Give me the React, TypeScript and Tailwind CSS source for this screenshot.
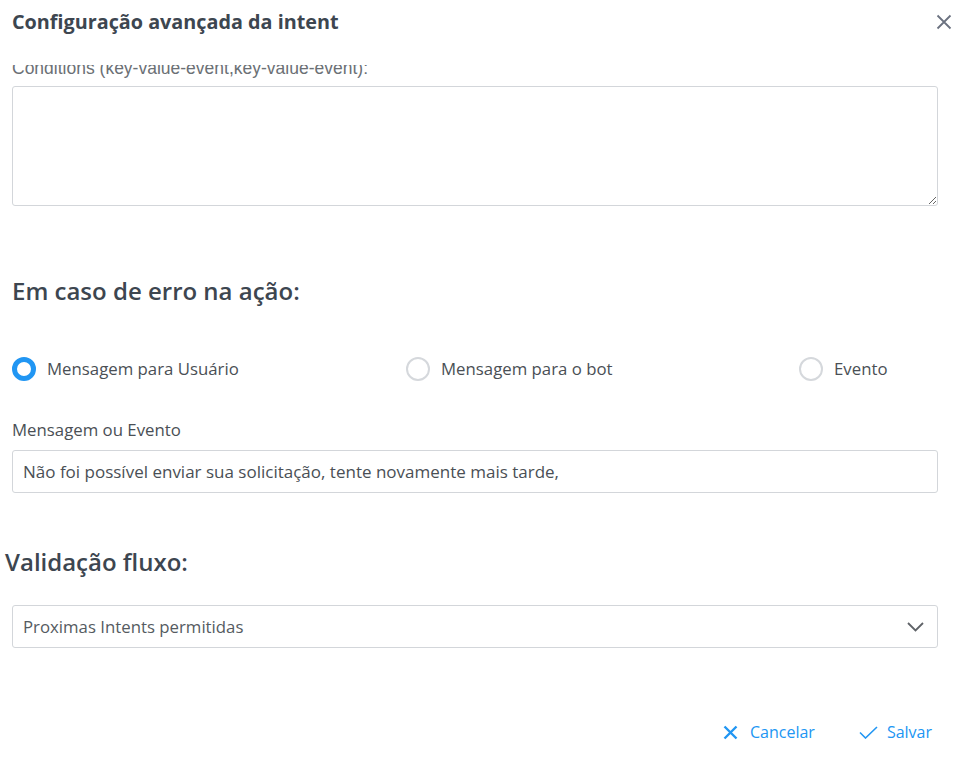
const font = { fontFamily: '"Open Sans", "Noto Sans", sans-serif' };

function Radio({ checked, label }: { checked?: boolean; label: string }) {
  return (
    <label className="flex items-center gap-[11px] cursor-pointer">
      <span
        className={
          checked
            ? "w-6 h-6 rounded-full border-[5px] border-[#2196f3] bg-white"
            : "w-6 h-6 rounded-full border-2 border-[#d5d8dc] bg-white"
        }
      />
      <span className="text-[16.8px] text-[#4a4f55]">{label}</span>
    </label>
  );
}

export default function App() {
  return (
    <div className="w-[958px] h-[768px] bg-white overflow-hidden flex flex-col" style={font}>
      {/* Header */}
      <header className="h-[65px] shrink-0 flex items-start justify-between pl-3 pr-[6px] pt-[7px] bg-white">
        <h1 className="text-[19.8px] font-bold text-[#3d4650] leading-[30px]">
          Configuração avançada da intent
        </h1>
        <button className="mt-[7px] text-[#6b7280]">
          <svg width="16" height="16" viewBox="0 0 16 16" fill="none" stroke="currentColor" strokeWidth="1.8">
            <path d="M1.5 1.5 14.5 14.5M14.5 1.5 1.5 14.5" />
          </svg>
        </button>
      </header>

      {/* Scrolled body */}
      <div className="flex-1 overflow-hidden pl-3 pr-5">
        <label
          className="block -mt-[9px] text-[17.5px] leading-[24px] text-[#6b7075]"
          style={{ fontFamily: '"Liberation Sans", Arial, sans-serif' }}
        >
          Conditions (key-value-event,key-value-event):
        </label>
        <textarea className="block mt-[6px] w-full h-[120px] border border-[#d3d6da] rounded-[3px] resize-y outline-none" />

        <h2 className="mt-[70px] text-[24px] font-semibold leading-[30px] text-[#3d4650]">
          Em caso de erro na ação:
        </h2>

        <div className="mt-[50px] flex items-center">
          <div className="w-[394px]">
            <Radio checked label="Mensagem para Usuário" />
          </div>
          <div className="w-[393px]">
            <Radio label="Mensagem para o bot" />
          </div>
          <Radio label="Evento" />
        </div>

        <label className="block mt-[37px] text-[16.8px] leading-[24px] text-[#4a4f55]">
          Mensagem ou Evento
        </label>
        <input
          className="block mt-[8px] w-full h-[43px] border border-[#d3d6da] rounded-[3px] px-[10px] text-[17px] text-[#4a4f55] outline-none"
          style={font}
          defaultValue="Não foi possível enviar sua solicitação, tente novamente mais tarde,"
        />

        <h2 className="-ml-[7px] mt-[54px] text-[24px] font-semibold leading-[30px] text-[#3d4650]">
          Validação fluxo:
        </h2>

        <div className="mt-[28px] w-full h-[43px] border border-[#d3d6da] rounded-[3px] pl-[10px] pr-[13px] flex items-center justify-between">
          <span className="text-[16.8px] text-[#555b61]">Proximas Intents permitidas</span>
          <svg width="17" height="10" viewBox="0 0 17 10" fill="none" stroke="#5f6368" strokeWidth="1.8">
            <path d="M1 1 8.5 8.5 16 1" />
          </svg>
        </div>

        <div className="mt-[72px] flex justify-end items-center gap-[44px] pr-[6px]">
          <button className="flex items-center gap-[12px] text-[#2196f3] text-[16px]">
            <svg width="15" height="15" viewBox="0 0 15 15" fill="none" stroke="currentColor" strokeWidth="2.4">
              <path d="M1.5 1.5 13.5 13.5M13.5 1.5 1.5 13.5" />
            </svg>
            Cancelar
          </button>
          <button className="flex items-center gap-[9px] text-[#2196f3] text-[16px]">
            <svg width="19" height="13" viewBox="0 0 19 13" fill="none" stroke="currentColor" strokeWidth="1.6">
              <path d="M1 6.5 6.5 12 18 1" />
            </svg>
            Salvar
          </button>
        </div>
      </div>
    </div>
  );
}
